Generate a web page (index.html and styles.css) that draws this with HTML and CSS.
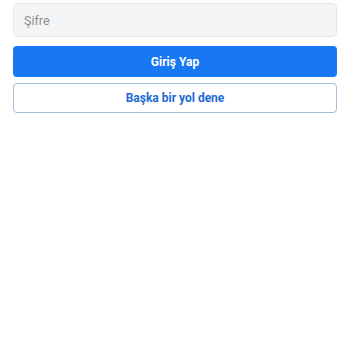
FILE: index.html
```html
<!DOCTYPE html>
<html lang="tr">
<head>
<meta charset="utf-8">
<link rel="stylesheet" href="styles.css">
</head>
<body>
<form class="login">
  <input class="field" type="password" placeholder="Şifre">
  <button class="btn primary" type="button">Giriş Yap</button>
  <button class="btn secondary" type="button">Başka bir yol dene</button>
</form>
</body>
</html>
```
FILE: styles.css
```css
html, body {
  margin: 0;
  padding: 0;
  background: #fff;
  font-family: Roboto, "Liberation Sans", sans-serif;
}
.login {
  display: flex;
  flex-direction: column;
  padding: 3px 13px 0;
}
.field {
  box-sizing: border-box;
  height: 34px;
  border: 1px solid #e4e6e9;
  border-radius: 5px;
  background: #f4f5f7;
  padding: 0 10px;
  font-family: inherit;
  font-size: 12.5px;
  color: #1c1e21;
  outline: none;
}
.field::placeholder {
  color: #8a8d91;
}
.btn {
  box-sizing: border-box;
  border-radius: 4px;
  font-family: inherit;
  font-size: 12px;
  font-weight: 700;
  cursor: pointer;
}
.primary {
  margin-top: 9px;
  height: 31px;
  border: none;
  background: #1877f2;
  color: #fff;
}
.secondary {
  margin-top: 6px;
  height: 30px;
  border: 1px solid #a8bcd6;
  background: #fff;
  color: #1b6bd4;
}
```
